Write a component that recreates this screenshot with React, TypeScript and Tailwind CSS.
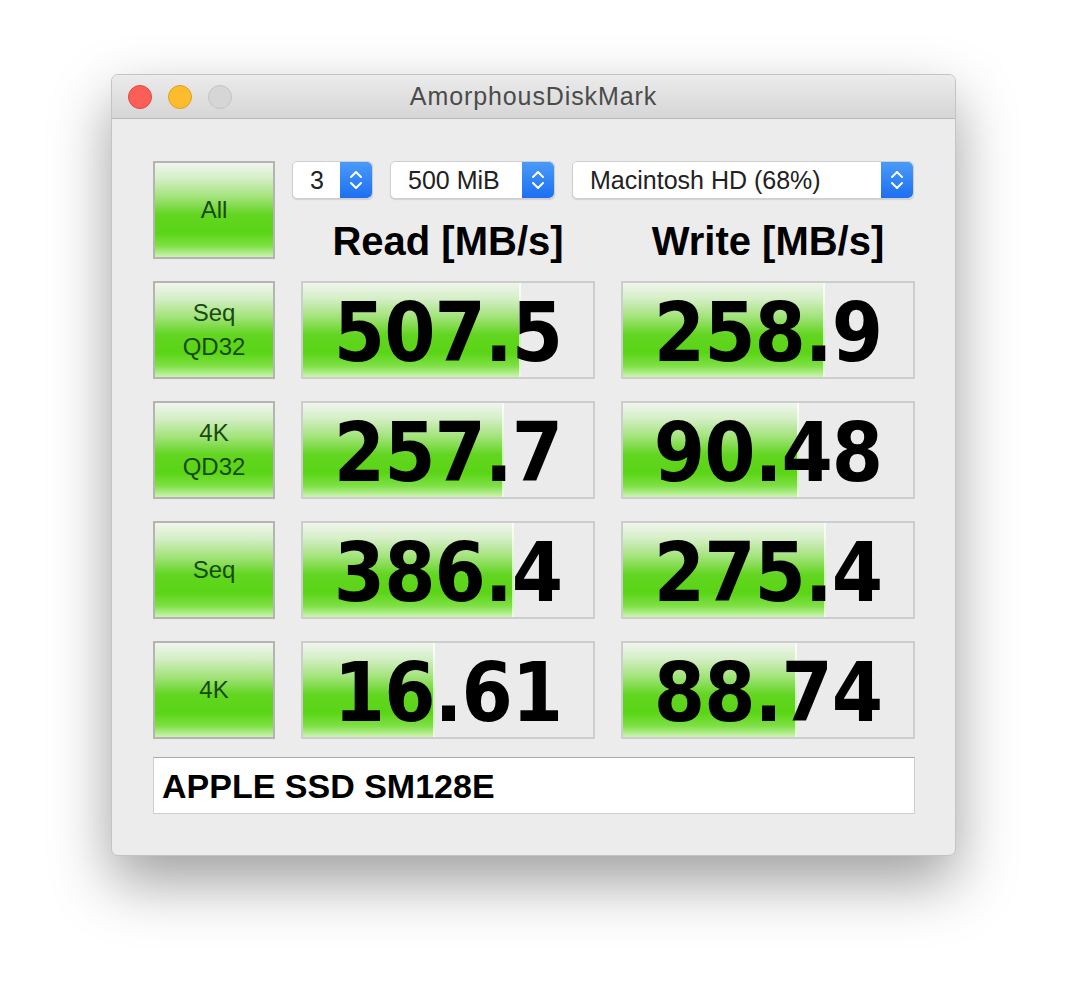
import React from 'react';

interface Result {
    label: string[];
    read: string;
    readBar: number;
    write: string;
    writeBar: number;
}

const results: Result[] = [
    { label: ['Seq', 'QD32'], read: '507.5', readBar: 218, write: '258.9', writeBar: 202 },
    { label: ['4K', 'QD32'], read: '257.7', readBar: 201, write: '90.48', writeBar: 176 },
    { label: ['Seq'], read: '386.4', readBar: 211, write: '275.4', writeBar: 203 },
    { label: ['4K'], read: '16.61', readBar: 132, write: '88.74', writeBar: 174 },
];

// Aqua-ish green used by the test buttons and the result bars
const greenFill =
    'bg-[linear-gradient(to_bottom,#f0f5ec_0%,#d6efc8_16%,#a2e37a_36%,#62d521_55%,#5ad515_74%,#7de044_88%,#cdf3b3_100%)]';

function Stepper() {
    return (
        <div className="flex h-full w-[32px] shrink-0 items-center justify-center rounded-r-[5px] bg-[linear-gradient(to_bottom,#4a9bf8,#1c6ff2)]">
            <svg width="16" height="24" viewBox="0 0 16 24" fill="none">
                <path d="M3 9L8 4L13 9" stroke="white" strokeWidth="2" strokeLinecap="round" strokeLinejoin="round" />
                <path d="M3 15L8 20L13 15" stroke="white" strokeWidth="2" strokeLinecap="round" strokeLinejoin="round" />
            </svg>
        </div>
    );
}

function Select({ value, className = '' }: { value: string; className?: string }) {
    return (
        <div
            className={`flex h-[38px] items-center rounded-[5px] border border-[#cfcfcf] bg-white shadow-[0_1px_1px_rgba(0,0,0,0.12)] ${className}`}
        >
            <span className="flex-1 whitespace-nowrap pl-[17px] text-[25px] leading-[30px] text-[#222]">{value}</span>
            <Stepper />
        </div>
    );
}

function TestButton({ lines }: { lines: string[] }) {
    return (
        <div
            className={`flex h-[98px] w-[122px] shrink-0 flex-col items-center justify-center border-2 border-[#b4b4b4] ${greenFill}`}
        >
            {lines.map((l) => (
                <span key={l} className="text-[24px] leading-[34px] text-[#184a10]">
                    {l}
                </span>
            ))}
        </div>
    );
}

function ValueCell({ value, bar }: { value: string; bar: number }) {
    return (
        <div className="relative h-[98px] w-[294px] overflow-hidden border-2 border-[#cdcdcd] bg-[#ebebeb]">
            <div
                className={`absolute inset-y-0 left-0 border-r-2 border-white/70 ${greenFill}`}
                style={{ width: bar }}
            />
            <div className="relative flex h-full items-center justify-center pt-[5px]">
                <span className="font-['DejaVu_Sans_Condensed','Liberation_Sans',sans-serif] text-[82px] font-bold leading-none tracking-[-1px] text-black">
                    {value}
                </span>
            </div>
        </div>
    );
}

export default function App() {
    return (
        <div className="min-h-[1004px] w-full bg-white pl-[111px] pt-[74px] font-['Liberation_Sans',Arial,sans-serif]">
            <div className="w-[845px] overflow-hidden rounded-[7px] border border-[#c4c4c4] bg-[#ececec] shadow-[0_26px_60px_rgba(0,0,0,0.38)]">
                {/* Title bar */}
                <div className="relative flex h-[44px] items-center border-b border-[#b9b9b9] bg-[linear-gradient(to_bottom,#ebebeb,#d6d6d6)]">
                    <div className="flex items-center gap-[16px] pl-[16px]">
                        <span className="h-[24px] w-[24px] rounded-full border border-[#e2463f] bg-[#fc5f57]" />
                        <span className="h-[24px] w-[24px] rounded-full border border-[#dfa023] bg-[#fdbc2e]" />
                        <span className="h-[24px] w-[24px] rounded-full border border-[#c4c4c4] bg-[#d6d6d6]" />
                    </div>
                    <span className="absolute inset-x-0 text-center text-[25px] tracking-[0.9px] text-[#4b4b4b]">
                        AmorphousDiskMark
                    </span>
                </div>

                {/* Content */}
                <div className="flex flex-col pb-[41px] pl-[41px] pr-[40px] pt-[42px]">
                    <div className="flex flex-col gap-[22px]">
                        <div className="flex h-[98px]">
                            <TestButton lines={['All']} />
                            <div className="flex flex-1 flex-col">
                                <div className="ml-[17px] flex gap-[17px]">
                                    <Select value="3" className="w-[81px]" />
                                    <Select value="500 MiB" className="w-[165px]" />
                                    <Select value="Macintosh HD (68%)" className="w-[342px]" />
                                </div>
                                <div className="ml-[26px] mt-[24px] flex gap-[26px]">
                                    <div className="w-[294px] text-center text-[40px] font-bold leading-[36px] text-black">
                                        Read [MB/s]
                                    </div>
                                    <div className="w-[294px] text-center text-[40px] font-bold leading-[36px] text-black">
                                        Write [MB/s]
                                    </div>
                                </div>
                            </div>
                        </div>

                        {results.map((r) => (
                            <div key={r.label.join('-')} className="flex gap-[26px]">
                                <TestButton lines={r.label} />
                                <ValueCell value={r.read} bar={r.readBar} />
                                <ValueCell value={r.write} bar={r.writeBar} />
                            </div>
                        ))}
                    </div>

                    {/* Drive name */}
                    <div className="mt-[18px] flex h-[57px] items-center border border-[#cfcfcf] border-t-[#a9a9a9] bg-white pl-[8px]">
                        <span className="text-[34px] font-bold leading-none text-black">APPLE SSD SM128E</span>
                    </div>
                </div>
            </div>
        </div>
    );
}
